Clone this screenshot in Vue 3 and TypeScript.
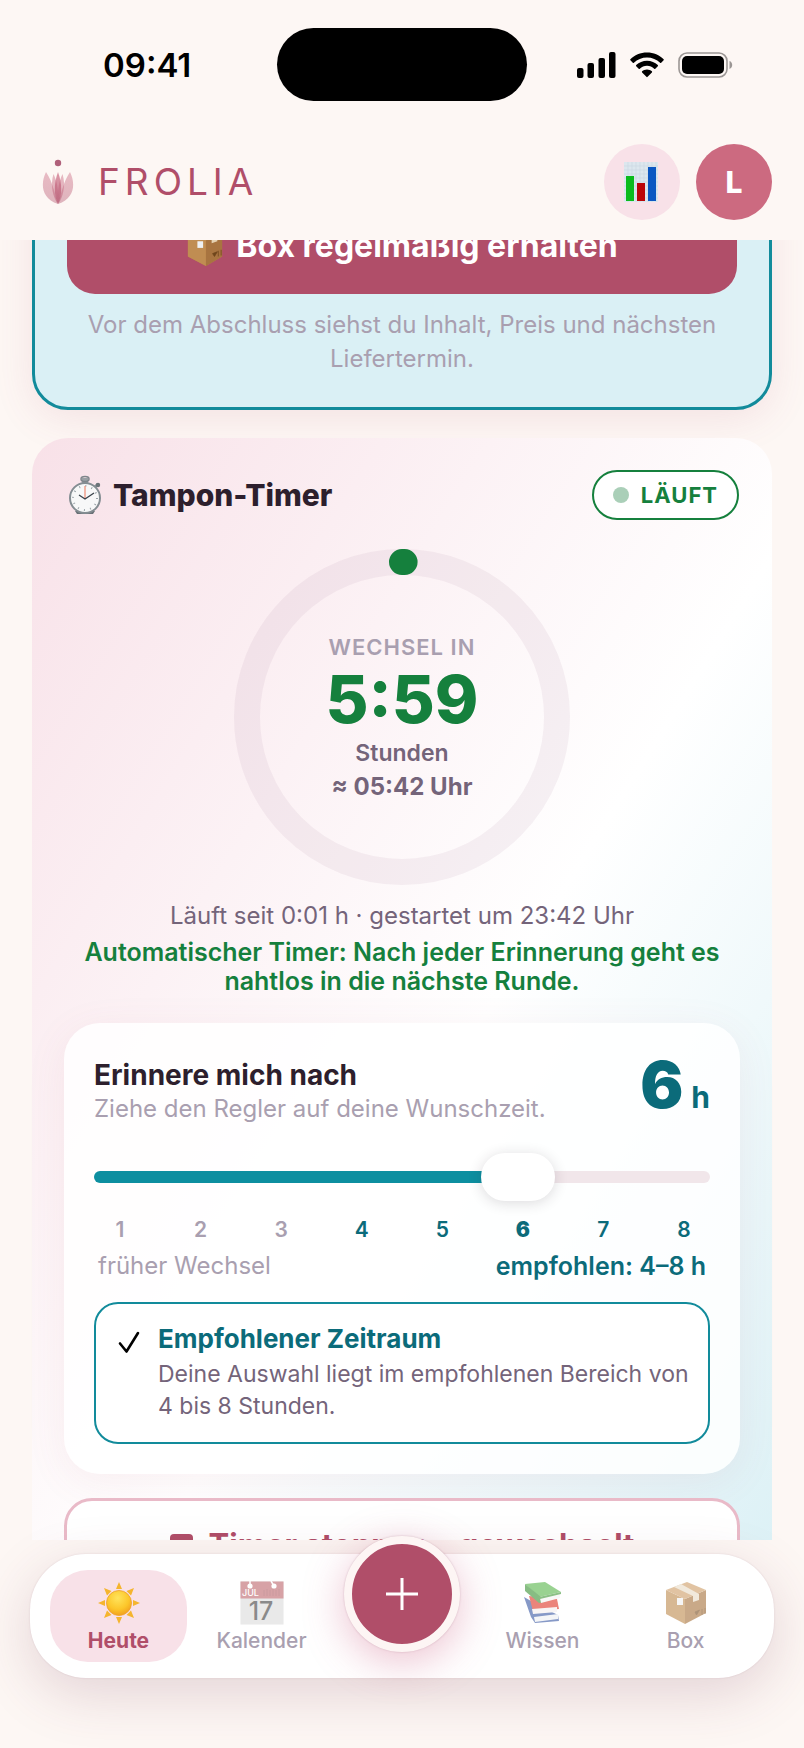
<script setup lang="ts">
import { computed, ref } from 'vue'

const hours = ref(6)
const steps = [1, 2, 3, 4, 5, 6, 7, 8]
const fill = computed(() => {
  const ratio = (Number(hours.value) - 1) / 7
  return { '--fill': `${6 + ratio * 88}%` }
})
</script>

<template>
  <div class="app">
    <div class="status">
      <span class="clock">09:41</span>
      <div class="island"></div>
      <div class="signals">
        <svg width="39" height="26" viewBox="0 0 39 26" aria-hidden="true">
          <rect x="0" y="16" width="6.500" height="10" rx="2" />
          <rect x="10.500" y="11" width="6.500" height="15" rx="2" />
          <rect x="21.500" y="6" width="6.500" height="20" rx="2" />
          <rect x="32" y="0" width="6.500" height="26" rx="2" />
        </svg>
        <svg width="34" height="26" viewBox="0 0 34 26" aria-hidden="true">
          <path d="M17 0.5C10.400.5 4.500 3 .400 7.200a.8.8 0 0 0 0 1.100l2.400 2.400a.8.8 0 0 0 1.100 0C7.300 7.400 11.900 5.400 17 5.400s9.700 2 13.100 5.300a.8.8 0 0 0 1.100 0l2.400-2.400a.8.8 0 0 0 0-1.100C29.500 3 23.600.5 17 .5z" />
          <path d="M17 8.800c-4.200 0-8 1.600-10.800 4.300a.8.8 0 0 0 0 1.100l2.500 2.500a.8.8 0 0 0 1.100 0c1.900-1.800 4.400-2.900 7.200-2.900s5.300 1.100 7.200 2.900a.8.8 0 0 0 1.100 0l2.500-2.500a.8.8 0 0 0 0-1.100C25 10.400 21.200 8.800 17 8.800z" />
          <path d="M17 17.400c-1.900 0-3.600.7-4.900 1.900a.8.8 0 0 0 0 1.100l4.300 4.400a.8.8 0 0 0 1.200 0l4.300-4.400a.8.8 0 0 0 0-1.100c-1.300-1.200-3-1.900-4.900-1.900z" />
        </svg>
        <svg width="55" height="26" viewBox="0 0 55 26" aria-hidden="true">
          <rect x="1" y="1" width="48" height="24" rx="8" fill="none" stroke="#9b9694" stroke-width="1.600" />
          <rect x="4" y="4" width="42" height="18" rx="5" />
          <path d="M51.500 9v8c1.600-.6 2.700-2.200 2.700-4s-1.100-3.400-2.700-4z" fill="#9b9694" />
        </svg>
      </div>
    </div>

    <header class="topbar">
      <a class="brand" href="#">
        <svg class="logo" width="32" height="48" viewBox="0 0 32 48" aria-hidden="true">
          <defs>
            <linearGradient id="petal" x1="0" y1="0" x2="0" y2="1">
              <stop offset="0" stop-color="#c9607b" />
              <stop offset="1" stop-color="#b04e69" />
            </linearGradient>
          </defs>
          <circle cx="16" cy="5" r="3.200" fill="#b0607a" />
          <g fill="url(#petal)">
            <path d="M4 14C-1 24-2 40 16 46 13 37 11 24 4 14z" opacity=".4" />
            <path d="M28 14C33 24 34 40 16 46 19 37 21 24 28 14z" opacity=".4" />
            <path d="M11.500 16C8 27 11 40 16 46 17 35 15.500 24 11.500 16z" opacity=".42" />
            <path d="M20.500 16C24 27 21 40 16 46 15 35 16.500 24 20.500 16z" opacity=".42" />
            <path d="M16 14C11.500 26 12 38 16 46 20 38 20.500 26 16 14z" opacity=".65" />
          </g>
        </svg>
        <span class="wordmark">FROLIA</span>
      </a>
      <div class="actions">
        <button class="round stats" type="button" aria-label="Statistik">
          <svg width="36" height="40" viewBox="0 0 36 40" aria-hidden="true">
            <rect x="0" y="0" width="34" height="40" fill="#dce7ee" />
            <path d="M4 0v40M8 0v40M12 0v40M16 0v40M20 0v40M24 0v40M28 0v40M32 0v40M0 4h34M0 8h34M0 12h34M0 16h34M0 20h34M0 24h34M0 28h34M0 32h34M0 36h34" stroke="#ccd9e2" stroke-width=".7" />
            <rect x="2" y="14" width="8" height="25" fill="#0bbb1c" />
            <rect x="13" y="21" width="8" height="18" fill="#bb0508" />
            <rect x="24" y="5" width="8" height="34" fill="#0a57c2" />
          </svg>
        </button>
        <button class="round avatar" type="button">L</button>
      </div>
    </header>

    <main class="content">
      <section class="offer">
        <button class="cta" type="button">
          <svg width="38" height="42" viewBox="0 0 40 44" aria-hidden="true">
            <path d="M20 1 38 8v25L21 43 2 33V8z" fill="#b98348" />
            <path d="M2 8l19 8v27L2 33z" fill="#c08d52" />
            <path d="M21 16l17-8v25L21 43z" fill="#a87440" />
            <path d="M2 8 20 1l18 7-17 8z" fill="#cfa06a" />
            <path d="M9 5l18 8v6l6-2v-6L15 3z" fill="#e6d2b2" />
            <rect x="12" y="17" width="6" height="7" fill="#eef0f2" />
            <path d="M28 30l2 3 3-5zM34 27v6M37 26v6" fill="#6f451c" stroke="#6f451c" stroke-width=".8" />
          </svg>
          Box regelmäßig erhalten
        </button>
        <p class="offer-note">Vor dem Abschluss siehst du Inhalt, Preis und nächsten Liefertermin.</p>
      </section>

      <section class="timer">
        <div class="timer-head">
          <h2 class="timer-title">
            <svg width="40" height="40" viewBox="0 0 40 40" aria-hidden="true">
              <rect x="17" y="3" width="6" height="6" fill="#99a0a4" />
              <ellipse cx="20" cy="4" rx="4" ry="2.500" fill="none" stroke="#7d858a" stroke-width="1.500" />
              <path d="M29 13l4-4" stroke="#8a9297" stroke-width="3" />
              <circle cx="33" cy="10" r="2.200" fill="#6b7378" />
              <path d="M10 36h20l-2 3H12z" fill="#697176" />
              <circle cx="20" cy="23" r="15" fill="#f7f8f8" stroke="#848d92" stroke-width="2" />
              <circle cx="20" cy="23" r="12" fill="none" stroke="#9aa3a8" stroke-width="2" stroke-dasharray="1 5.280" />
              <path d="M20 24V11" stroke="#f0a08c" stroke-width="1.500" />
              <path d="M14 20l6 4 9-6" fill="none" stroke="#39424a" stroke-width="1.300" />
            </svg>
            Tampon-Timer
          </h2>
          <span class="badge"><i class="badge-dot"></i>LÄUFT</span>
        </div>

        <div class="dial">
          <svg class="ring" viewBox="0 0 336 336" aria-hidden="true">
            <circle cx="168" cy="168" r="155" fill="none" stroke="#a98ca8" stroke-opacity=".11" stroke-width="26" />
            <path d="M168 13a155 155 0 0 1 2.600 0" fill="none" stroke="#15803d" stroke-width="26" stroke-linecap="round" />
          </svg>
          <div class="dial-text">
            <span class="dial-label">WECHSEL IN</span>
            <strong class="dial-time">5:59</strong>
            <span class="dial-unit">Stunden</span>
            <span class="dial-clock">≈ 05:42 Uhr</span>
          </div>
        </div>

        <p class="since">Läuft seit 0:01 h · gestartet um 23:42 Uhr</p>
        <p class="auto">Automatischer Timer: Nach jeder Erinnerung geht es nahtlos in die nächste Runde.</p>

        <div class="panel">
          <div class="panel-head">
            <div class="panel-copy">
              <label class="panel-title" for="hours">Erinnere mich nach</label>
              <p class="panel-sub">Ziehe den Regler auf deine Wunschzeit.</p>
            </div>
            <output class="value" for="hours">{{ hours }}<small>h</small></output>
          </div>
          <input id="hours" v-model="hours" class="slider" type="range" min="1" max="8" step="1" :style="fill" />
          <div class="ticks">
            <span
              v-for="n in steps"
              :key="n"
              class="tick"
              :class="{ good: n >= 4, current: n === Number(hours) }"
            >{{ n }}</span>
          </div>
          <div class="legend">
            <span>früher Wechsel</span>
            <strong>empfohlen: 4–8 h</strong>
          </div>
          <div class="advice">
            <svg width="22" height="24" viewBox="0 0 22 24" aria-hidden="true">
              <path d="M2 12.500 8.500 20.500 20 2" fill="none" stroke="#000" stroke-width="2.600" stroke-linecap="round" stroke-linejoin="round" />
            </svg>
            <div>
              <h3 class="advice-title">Empfohlener Zeitraum</h3>
              <p class="advice-text">Deine Auswahl liegt im empfohlenen Bereich von 4 bis 8 Stunden.</p>
            </div>
          </div>
        </div>

        <button class="stop" type="button"><i class="stop-mark"></i>Timer stoppen – gewechselt</button>
      </section>
    </main>

    <footer class="dock">
      <nav class="nav">
        <a class="item active" href="#">
          <svg width="44" height="44" viewBox="0 0 44 44" aria-hidden="true">
            <defs>
              <radialGradient id="sun" cx=".45" cy=".3" r=".75">
                <stop offset="0" stop-color="#ffe45c" />
                <stop offset=".6" stop-color="#fcc62a" />
                <stop offset="1" stop-color="#f0991c" />
              </radialGradient>
            </defs>
            <path d="M22 1l3 7h-6zM22 43l3-7h-6zM1 22l7-3v6zM43 22l-7-3v6zM7 7l7.500 3-4.500 4.500zM37 7l-7.500 3 4.500 4.500zM7 37l7.500-3-4.500-4.500zM37 37l-7.500-3 4.500-4.500z" fill="#f5b52e" />
            <circle cx="22" cy="22" r="12.500" fill="url(#sun)" stroke="#eda028" stroke-width=".8" />
          </svg>
          <span>Heute</span>
        </a>
        <a class="item" href="#">
          <svg class="dim" width="44" height="44" viewBox="0 0 44 44" aria-hidden="true">
            <rect x="0.500" y="0.500" width="43" height="43" fill="#dcdcdc" />
            <rect x="0.500" y="0.500" width="43" height="17" fill="#bf6a70" />
            <circle cx="10" cy="5" r="2.600" fill="#fff" />
            <circle cx="34" cy="5" r="2.600" fill="#fff" />
            <path d="M10 0v5M31 0l3 5" stroke="#fff" stroke-width="1.500" />
            <path d="M24 9v6M27 8v7M30 9v6M33 8v7M36 9v6M39 8v7" stroke="#a65b62" stroke-width=".8" />
            <text x="2" y="15" font-size="9" fill="#fff">JUL</text>
            <text x="21" y="39" font-size="25" text-anchor="middle" fill="#444">17</text>
          </svg>
          <span>Kalender</span>
        </a>
        <button class="fab" type="button" aria-label="Eintrag hinzufügen">
          <svg width="34" height="34" viewBox="0 0 34 34" aria-hidden="true">
            <path d="M17 1v32M1 17h32" stroke="#fff" stroke-width="3" />
          </svg>
        </button>
        <a class="item" href="#">
          <svg class="dim" width="44" height="44" viewBox="0 0 44 44" aria-hidden="true">
            <path d="M3 16l7 20 4 6 24-2-1-6-20-10z" fill="#3d5ba5" />
            <path d="M13 36l24-3v5l-23 3z" fill="#eef0f3" />
            <path d="M8 15l4 15 26-2-2-10z" fill="#e0392b" />
            <path d="M11 28l25-2v5l-24 2z" fill="#f4efef" />
            <path d="M4 3l20-2 16 10-22 5z" fill="#5cb84e" />
            <path d="M4 3v7l14 12 5-1-3-5z" fill="#3f9438" />
            <path d="M19 17l20-4v4l-19 5z" fill="#f4f5f3" />
            <path d="M18 16l22-5v2l-21 5z" fill="#459a3c" />
          </svg>
          <span>Wissen</span>
        </a>
        <a class="item" href="#">
          <svg class="dim" width="44" height="44" viewBox="0 0 44 44" aria-hidden="true">
            <path d="M2 9l19 9v25L2 33z" fill="#c08d52" />
            <path d="M21 18l21-9v23L21 43z" fill="#a97640" />
            <path d="M2 9 23 1l19 8-21 9z" fill="#cfa06a" />
            <path d="M10 6l19 9v6l6-2v-6L17 3z" fill="#e9dcc8" />
            <rect x="13" y="17" width="6" height="7" fill="#f1f1f1" />
            <path d="M31 31l1.500 3 3-5zM38 28v6M41 27v6" fill="#7c5227" stroke="#7c5227" stroke-width=".8" />
          </svg>
          <span>Box</span>
        </a>
      </nav>
    </footer>
  </div>
</template>

<style>
body {
  margin: 0;
  background: #fdf7f4;
}
</style>

<style scoped>
* {
  box-sizing: border-box;
}
.app {
  display: flex;
  flex-direction: column;
  height: 100vh;
  overflow: hidden;
  background: #fdf7f4;
  color: #2d1f2d;
  font-family: Inter, "Liberation Sans", sans-serif;
  font-size: 24px;
  line-height: 32px;
}
h2,
h3,
p {
  margin: 0;
}
button {
  border: 0;
  padding: 0;
  font: inherit;
  cursor: pointer;
}
a {
  color: inherit;
  text-decoration: none;
}
svg {
  flex: none;
}

.status {
  display: grid;
  grid-template-columns: 1fr 250px 1fr;
  align-items: center;
  padding: 28px 32px 0;
}
.clock {
  margin-left: 71px;
  color: #000;
  font-size: 33px;
  font-weight: 600;
}
.island {
  height: 73px;
  border-radius: 37px;
  background: #000;
}
.signals {
  display: flex;
  gap: 14px;
  margin-left: 50px;
}

.topbar {
  position: relative;
  z-index: 2;
  display: flex;
  align-items: center;
  justify-content: space-between;
  padding: 43px 32px 20px 42px;
  background: #fdf7f4;
}
.brand {
  display: flex;
  align-items: center;
  gap: 24px;
}
.wordmark {
  color: #b04e69;
  font-size: 37px;
  font-weight: 400;
  letter-spacing: 5px;
}
.actions {
  display: flex;
  gap: 16px;
}
.round {
  display: flex;
  align-items: center;
  justify-content: center;
  width: 76px;
  height: 76px;
  border-radius: 50%;
}
.stats {
  background: #f8e1e8;
}
.avatar {
  background: #cc6a80;
  color: #fff;
  font-size: 30px;
  font-weight: 800;
}

.content {
  flex: 1;
  min-height: 0;
  overflow: hidden;
  padding: 0 32px;
}
.offer {
  margin-top: -77px;
  padding: 32px 32px 31px;
  border: 3px solid #128b9b;
  border-radius: 36px;
  background: #daf0f5;
  box-shadow: 0 8px 40px rgba(176, 78, 105, 0.12);
  text-align: center;
}
.cta {
  display: flex;
  align-items: center;
  justify-content: center;
  gap: 12px;
  width: 100%;
  height: 96px;
  border-radius: 28px;
  background: #b04e69;
  color: #fff;
  font-size: 32px;
  font-weight: 700;
}
.offer-note {
  margin-top: 14px;
  color: #a99fb0;
  line-height: 34px;
}

.timer {
  margin-top: 28px;
  padding: 32px;
  border-radius: 36px;
  background: linear-gradient(to bottom right, #f8e1e8 0%, #ffffff 55%, #daf0f5 100%);
}
.timer-head {
  display: flex;
  align-items: center;
  justify-content: space-between;
  padding: 0 1px;
}
.timer-title {
  display: flex;
  align-items: center;
  gap: 8px;
  font-size: 30px;
  font-weight: 800;
}
.badge {
  display: flex;
  align-items: center;
  gap: 12px;
  height: 50px;
  padding: 0 19px;
  border: 2px solid #15803d;
  border-radius: 25px;
  background: #fff;
  color: #15803d;
  font-size: 22px;
  font-weight: 700;
  letter-spacing: 1px;
}
.badge-dot {
  width: 16px;
  height: 16px;
  border-radius: 50%;
  background: #aacfb8;
}
.dial {
  display: grid;
  place-items: center;
  margin: 29px auto 0;
  width: 336px;
}
.ring,
.dial-text {
  grid-area: 1 / 1;
}
.ring {
  width: 100%;
}
.dial-text {
  display: flex;
  flex-direction: column;
  align-items: center;
  padding-top: 2px;
}
.dial-label {
  color: #a99fb0;
  font-size: 22px;
  font-weight: 600;
  letter-spacing: 1px;
}
.dial-time {
  color: #15803d;
  font-size: 66px;
  font-weight: 800;
  line-height: 72px;
}
.dial-unit {
  margin-top: 2px;
  color: #74647a;
  font-size: 23px;
  font-weight: 600;
}
.dial-clock {
  color: #74647a;
  font-weight: 700;
  line-height: 36px;
}
.since {
  margin-top: 15px;
  color: #74647a;
  text-align: center;
}
.auto {
  margin-top: 6px;
  color: #15803d;
  font-size: 25px;
  font-weight: 600;
  line-height: 29px;
  text-align: center;
}

.panel {
  margin-top: 27px;
  padding: 30px;
  border-radius: 36px;
  background: rgba(255, 255, 255, 0.85);
  box-shadow: 0 8px 40px rgba(176, 78, 105, 0.08);
}
.panel-head {
  display: flex;
  align-items: flex-start;
  justify-content: space-between;
}
.panel-copy {
  padding-top: 4px;
}
.panel-title {
  display: block;
  font-size: 28px;
  font-weight: 700;
  line-height: 36px;
}
.panel-sub {
  color: #a99fb0;
}
.value {
  display: flex;
  align-items: baseline;
  gap: 8px;
  color: #0b6b7a;
  font-size: 64px;
  font-weight: 900;
  line-height: 64px;
}
.value small {
  font-size: 30px;
  font-weight: 700;
  line-height: 32px;
}
.slider {
  display: block;
  width: 100%;
  height: 48px;
  margin: 28px 0 0;
  appearance: none;
  background: transparent;
}
.slider::-webkit-slider-runnable-track {
  height: 12px;
  border-radius: 6px;
  background: linear-gradient(to right, #0d8fa0 var(--fill), #f1e6ea var(--fill));
}
.slider::-webkit-slider-thumb {
  appearance: none;
  width: 74px;
  height: 48px;
  margin-top: -18px;
  border-radius: 24px;
  background: #fff;
  box-shadow: 0 2px 14px rgba(45, 31, 45, 0.16);
}
.ticks {
  display: flex;
  justify-content: space-between;
  margin-top: 17px;
}
.tick {
  width: 52px;
  color: #a99fb0;
  font-size: 21px;
  font-weight: 600;
  line-height: 24px;
  text-align: center;
}
.good {
  color: #0b6b7a;
}
.current {
  font-weight: 900;
}
.legend {
  display: flex;
  justify-content: space-between;
  margin-top: 8px;
  padding: 0 4px;
  color: #a99fb0;
}
.legend strong {
  color: #0b6b7a;
  font-size: 25px;
  font-weight: 600;
}
.advice {
  display: flex;
  gap: 18px;
  margin-top: 20px;
  padding: 19px 12px 20px 22px;
  border: 2px solid #128b9b;
  border-radius: 24px;
  background: #fff;
}
.advice svg {
  margin-top: 8px;
}
.advice-title {
  color: #0b6b7a;
  font-size: 26px;
  font-weight: 700;
}
.advice-text {
  margin-top: 3px;
  color: #74647a;
  font-size: 23px;
}
.stop {
  display: flex;
  align-items: center;
  justify-content: center;
  gap: 16px;
  width: 100%;
  height: 94px;
  margin-top: 24px;
  border: 3px solid #e9bac8;
  border-radius: 28px;
  background: #fff;
  color: #b04e69;
  font-size: 31px;
  font-weight: 700;
}
.stop-mark {
  width: 23px;
  height: 23px;
  border-radius: 4px;
  background: #b04e69;
}

.dock {
  position: relative;
  z-index: 1;
  padding: 14px 30px 70px;
}
.nav {
  display: grid;
  grid-template-columns: 1fr 1fr 132px 1fr 1fr;
  gap: 6px;
  align-items: center;
  padding: 16px 20px;
  border-radius: 56px;
  background: #fff;
  box-shadow: 0 16px 56px rgba(110, 50, 80, 0.18), 0 0 2px rgba(110, 50, 80, 0.16);
}
.item {
  display: flex;
  flex-direction: column;
  align-items: center;
  gap: 4px;
  height: 92px;
  padding-top: 11px;
  border-radius: 38px;
  color: #a99fb0;
  font-size: 21px;
  font-weight: 500;
  line-height: 24px;
}
.active {
  background: #f8e1e8;
  color: #b04e69;
  font-weight: 700;
}
.dim {
  opacity: 0.62;
}
.fab {
  display: flex;
  align-items: center;
  justify-content: center;
  justify-self: center;
  width: 116px;
  height: 116px;
  margin: -34px 0 10px;
  border: 8px solid #fdf5f4;
  border-radius: 50%;
  background: #b04e69;
  box-shadow: 0 10px 40px rgba(200, 80, 120, 0.35), 0 0 2px rgba(110, 50, 80, 0.3);
}
</style>
